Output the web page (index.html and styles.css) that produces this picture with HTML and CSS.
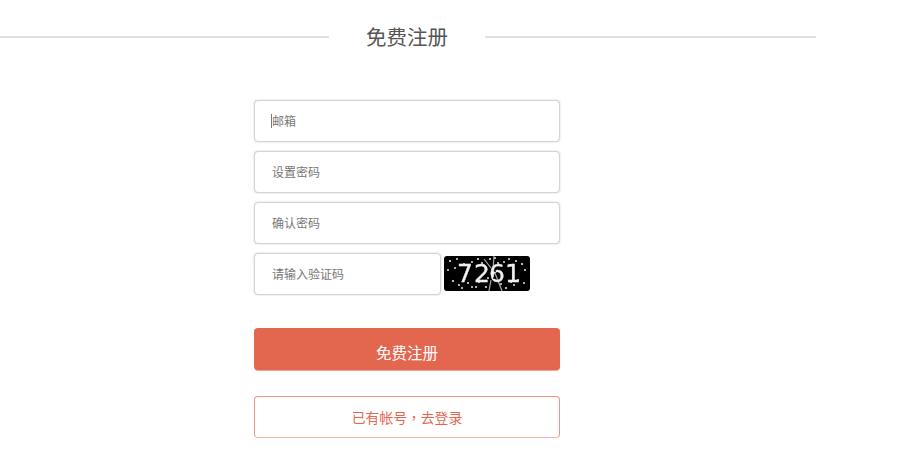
FILE: index.html
```html
<!DOCTYPE html>
<html>
<head>
    <meta charset="utf-8">
    <title>免费注册</title>
    <link rel="stylesheet" href="styles.css">
</head>
<body>
    <div class="page">
        <div class="title">
            <span class="title_line line_left"></span>
            <h2>免费注册</h2>
            <span class="title_line"></span>
        </div>
        <form class="form">
            <span class="caret"></span>
            <input class="text_input" type="text" placeholder="邮箱">
            <input class="text_input" type="password" placeholder="设置密码">
            <input class="text_input" type="password" placeholder="确认密码">
            <section class="code_row">
                <input class="text_input code_input" type="text" placeholder="请输入验证码">
                <svg class="code_img" viewBox="0 0 86 35" width="86" height="35">
                    <rect width="86" height="35" rx="3" fill="#000"/>
                    <g class="code_blur">
                        <g class="code_noise">
                            <circle cx="6" cy="5" r="1.1"/><circle cx="13" cy="3" r="1"/><circle cx="20" cy="8" r="1"/>
                            <circle cx="4" cy="14" r="1"/><circle cx="9" cy="25" r="1.1"/><circle cx="15" cy="29" r="1"/>
                            <circle cx="24" cy="27" r="1.1"/><circle cx="32" cy="31" r="1"/><circle cx="28" cy="6" r="1"/>
                            <circle cx="34" cy="3" r="1.1"/><circle cx="38" cy="7" r="1"/><circle cx="35" cy="26" r="1"/>
                            <circle cx="42" cy="31" r="1.1"/><circle cx="46" cy="3" r="1.1"/><circle cx="51" cy="2" r="1.1"/>
                            <circle cx="57" cy="28" r="1"/><circle cx="62" cy="32" r="1.1"/><circle cx="60" cy="6" r="1"/>
                            <circle cx="66" cy="9" r="1.1"/><circle cx="72" cy="5" r="1.1"/><circle cx="78" cy="8" r="1.1"/>
                            <circle cx="81" cy="14" r="1"/><circle cx="74" cy="24" r="1.1"/><circle cx="70" cy="29" r="1"/>
                            <circle cx="80" cy="27" r="1"/><circle cx="44" cy="22" r="1"/><circle cx="18" cy="32" r="1"/>
                            <circle cx="11" cy="12" r="1"/><circle cx="65" cy="3" r="1"/><circle cx="54" cy="7" r="1"/>
                            <circle cx="28" cy="31" r="1"/><circle cx="67" cy="26" r="1"/>
                        </g>
                        <path class="code_scratch" d="M50 0L49 14M49 12L58 35M40 3L47 12M47 24L45 35"/>
                        <text class="code_text" x="13" y="26">7</text>
                        <text class="code_text" x="30" y="26">2</text>
                        <text class="code_text" x="45" y="26">6</text>
                        <text class="code_text" x="61" y="26">1</text>
                        <g class="code_specks">
                            <circle cx="51" cy="15" r="1"/><circle cx="55" cy="19" r="1.1"/><circle cx="50" cy="22" r="1"/>
                        </g>
                    </g>
                </svg>
            </section>
            <button class="btn btn_register" type="button">免费注册</button>
            <a class="btn btn_login" href="#">已有帐号<span class="comma">，</span>去登录</a>
        </form>
    </div>
</body>
</html>
```

FILE: styles.css
```css
*{
    box-sizing: border-box;
    padding: 0;
    margin: 0;
}
body{
    background: #fff;
    font-family: "Liberation Sans", "Noto Sans CJK SC", sans-serif;
}
.page{
    width: 816px;
}
.title{
    display: flex;
    align-items: center;
    height: 38px;
    margin-top: 19px;
}
.title h2{
    width: 156px;
    font-size: 20.5px;
    font-weight: normal;
    text-align: center;
    color: #555;
    line-height: 38px;
}
.title_line{
    flex: 1;
    height: 2px;
    margin-bottom: 2px;
    background: #e0e0e0;
}
.line_left{
    flex: none;
    width: 329px;
}
.form{
    position: relative;
    width: 306px;
    margin: 43px 0 0 254px;
    display: flex;
    flex-direction: column;
}
.caret{
    position: absolute;
    left: 17px;
    top: 14px;
    width: 1px;
    height: 14px;
    background: #777;
}
.text_input{
    display: block;
    width: 306px;
    height: 42px;
    margin-bottom: 9px;
    padding: 2px 17px 0;
    border: 1px solid #d4d4d4;
    border-radius: 4px;
    box-shadow: 0 0 2px #ccc;
    outline: none;
    font-size: 12px;
    font-family: inherit;
    color: #555;
}
.text_input::placeholder{
    color: #777;
}
.code_row{
    display: flex;
    align-items: flex-start;
    gap: 3px;
}
.code_input{
    width: 187px;
}
.code_img{
    display: block;
    margin-top: 3px;
}
.code_blur{
    filter: blur(0.5px);
}
.code_noise{
    fill: #e4e4e4;
}
.code_specks{
    fill: #000;
}
.code_scratch{
    stroke: #aaa;
    stroke-width: 1.2;
    fill: none;
}
.code_text{
    font-family: "DejaVu Sans", sans-serif;
    font-size: 25px;
    fill: #f0f0f0;
    stroke: #f0f0f0;
    stroke-width: 0.3;
}
.btn{
    display: block;
    width: 306px;
    border-radius: 4px;
    text-align: center;
    font-family: inherit;
    text-decoration: none;
}
.btn_register{
    height: 42px;
    margin-top: 24px;
    padding-top: 5px;
    border: none;
    background: #e3664f;
    box-shadow: 0 1px 0 #f0a595;
    color: #fff;
    font-size: 15.5px;
}
.btn_login{
    height: 42px;
    margin-top: 26px;
    line-height: 41px;
    border: 1px solid #f3927f;
    border-bottom-color: #f8b5a8;
    background: #fff;
    color: #e3664f;
    font-size: 13.8px;
}
.comma{
    font-family: "Noto Sans CJK TC", sans-serif;
}
```
